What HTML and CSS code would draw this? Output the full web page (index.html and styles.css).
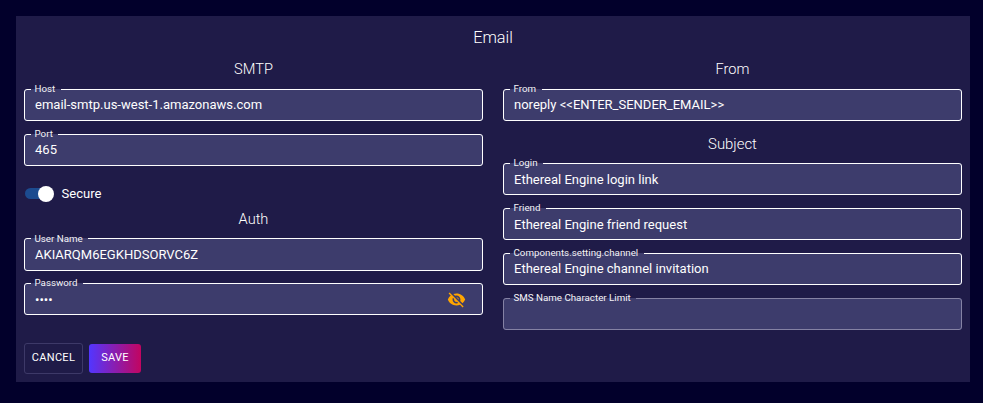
FILE: index.html
```html
<!DOCTYPE html>
<html lang="en">
<head>
<meta charset="utf-8">
<title>Email</title>
<link rel="stylesheet" href="styles.css">
</head>
<body>
<form class="panel">
  <h1 class="title">Email</h1>
  <div class="columns">
    <section class="column">
      <h2 class="heading">SMTP</h2>
      <div class="field"><fieldset class="outline"><legend>Host</legend></fieldset><span class="value">email-smtp.us-west-1.amazonaws.com</span></div>
      <div class="field"><fieldset class="outline"><legend>Port</legend></fieldset><span class="value">465</span></div>
      <div class="switch-row"><span class="track"><span class="thumb"></span></span><span class="switch-label">Secure</span></div>
      <h2 class="heading auth">Auth</h2>
      <div class="field tall"><fieldset class="outline"><legend>User Name</legend></fieldset><span class="value">AKIARQM6EGKHDSORVC6Z</span></div>
      <div class="field"><fieldset class="outline"><legend>Password</legend></fieldset><span class="value lower">••••</span>
        <svg class="eye" viewBox="0 0 24 24"><path d="M12 7c2.76 0 5 2.24 5 5 0 .65-.13 1.26-.36 1.83l2.92 2.92c1.51-1.26 2.7-2.89 3.43-4.75-1.73-4.39-6-7.5-11-7.5-1.4 0-2.74.25-3.98.7l2.16 2.16C10.74 7.13 11.35 7 12 7zM2 4.27l2.28 2.28.46.46C3.08 8.3 1.78 10.02 1 12c1.73 4.39 6 7.5 11 7.5 1.55 0 3.03-.3 4.38-.84l.42.42L19.73 22 21 20.73 3.27 3 2 4.27zM7.53 9.8l1.55 1.55c-.05.21-.08.43-.08.65 0 1.66 1.34 3 3 3 .22 0 .44-.03.65-.08l1.55 1.55c-.67.33-1.41.53-2.2.53-2.76 0-5-2.24-5-5 0-.79.2-1.53.53-2.2zm4.31-.78l3.15 3.15.02-.16c0-1.66-1.34-3-3-3l-.17.01z"/></svg>
      </div>
    </section>
    <section class="column">
      <h2 class="heading">From</h2>
      <div class="field"><fieldset class="outline"><legend>From</legend></fieldset><span class="value">noreply &lt;&lt;ENTER_SENDER_EMAIL&gt;&gt;</span></div>
      <h2 class="heading subject">Subject</h2>
      <div class="field"><fieldset class="outline"><legend>Login</legend></fieldset><span class="value lower">Ethereal Engine login link</span></div>
      <div class="field"><fieldset class="outline"><legend>Friend</legend></fieldset><span class="value lower">Ethereal Engine friend request</span></div>
      <div class="field"><fieldset class="outline"><legend>Components.setting.channel</legend></fieldset><span class="value">Ethereal Engine channel invitation</span></div>
      <div class="field"><fieldset class="outline dim"><legend>SMS Name Character Limit</legend></fieldset></div>
    </section>
  </div>
  <div class="actions">
    <button type="button" class="button cancel">CANCEL</button>
    <button type="button" class="button save">SAVE</button>
  </div>
</form>
</body>
</html>
```
FILE: styles.css
```css
* { box-sizing: border-box; }
body {
  margin: 0;
  padding: 16px 13px 21px 16px;
  background: #02002b;
  color: #fff;
  font-family: Roboto, "Liberation Sans", sans-serif;
}
.panel {
  height: 366px;
  padding: 8px;
  background: #1f1b48;
}
.title, .heading {
  margin: 0;
  font-weight: 300;
  text-align: center;
}
.title { font-size: 16.25px; line-height: 27px; }
.columns { display: grid; grid-template-columns: 1fr 1fr; gap: 20px; height: 292px; }
.heading { height: 38px; padding-top: 8px; font-size: 14.6px; line-height: 20px; }
.auth { height: 29px; padding-top: 0; }
.subject { height: 29px; padding-top: 0; font-size: 14.9px; }
.field {
  position: relative;
  display: flex;
  align-items: center;
  height: 32px;
  margin-bottom: 13px;
  padding: 0 12px 0 11px;
  border-radius: 3px;
  background: #3d3c6c;
}
.tall { height: 33px; margin-bottom: 12px; }
.outline {
  position: absolute;
  inset: -5px 0 0;
  margin: 0;
  padding: 0 6px;
  border: 1px solid #fff;
  border-radius: 3px;
}
.outline.dim { border-color: #8582a4; }
.outline legend {
  height: 11px;
  padding: 0 5.5px 0 3.5px;
  color: #f4f3f7;
  font-size: 9.75px;
  line-height: 9px;
}
.tall legend { line-height: 11px; }
.value { font-size: 13.02px; line-height: 18px; }
.lower { padding-top: 2px; }
.eye { width: 19px; height: 19px; margin-left: auto; margin-right: 5px; fill: #ffa500; }
.switch-row { display: flex; align-items: center; height: 30px; padding-bottom: 2px; }
.track {
  position: relative;
  width: 28px;
  height: 11px;
  margin: 0 9px 0 1px;
  border-radius: 6px;
  background: #1c4b8f;
}
.thumb {
  position: absolute;
  top: -2px;
  right: -1px;
  width: 16px;
  height: 16px;
  border-radius: 50%;
  background: #fff;
}
.switch-label { margin-left: -0.4px; font-size: 13px; }
.actions { display: flex; align-items: center; gap: 6px; height: 31px; }
.button {
  padding: 0 0 2px;
  border: 0;
  border-radius: 3px;
  color: #fff;
  font: 400 11px/20px Roboto, "Liberation Sans", sans-serif;
  letter-spacing: 0.3px;
}
.cancel { width: 59px; height: 31px; border: 1px solid #3d3968; background: transparent; }
.save { width: 52px; height: 29px; background: linear-gradient(90deg, #5236ff, #c20560); }
```
